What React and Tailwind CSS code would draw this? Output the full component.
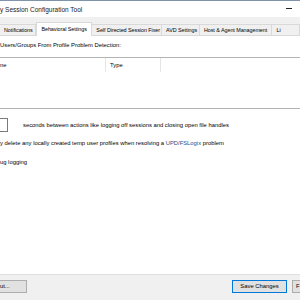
const tabs = [
  { label: 'Notifications', w: 'w-[39px]' },
  { label: 'Behavioral Settings', w: 'w-[60px]', active: true },
  { label: 'Self Directed Session Fixer', w: 'w-[75px]' },
  { label: 'AVD Settings', w: 'w-[41px]' },
  { label: 'Host & Agent Management', w: 'w-[78px]' },
  { label: 'Li', w: 'w-[30px]' },
]

export default function App() {
  return (
    <div className="w-[300px] h-[300px] overflow-hidden flex flex-col bg-[#f0f0f0] text-black text-[5.85px] leading-[7px] font-['Liberation_Sans',Arial,sans-serif]">
      {/* Title bar */}
      <div className="h-[17px] shrink-0 bg-white border-t border-[#7f93ab] flex items-center justify-between">
        <span className="text-[6.5px] text-[#1a1a1a]">y Session Configuration Tool</span>
        <div className="w-[6px] h-px bg-[#222] mr-[8px] -mt-[2px]" />
      </div>

      {/* Tabs */}
      <div className="h-[18px] shrink-0 flex items-end -ml-px whitespace-nowrap text-[5.4px] tracking-[-0.05px]">
        {tabs.map((t) =>
          t.active ? (
            <div
              key={t.label}
              className={`${t.w} h-[14px] -mb-px bg-white border border-b-0 border-[#d9d9d9] flex items-center justify-center relative z-10 pb-[1px]`}
            >
              {t.label}
            </div>
          ) : (
            <div
              key={t.label}
              className={`${t.w} h-[11px] bg-[#f0f0f0] border border-b-0 border-[#d9d9d9] -ml-px first:ml-0 flex items-center pl-[4px] overflow-hidden`}
            >
              {t.label}
            </div>
          )
        )}
      </div>

      {/* Panel */}
      <div className="flex-1 bg-white border-t border-[#d9d9d9] flex flex-col whitespace-nowrap">
        <div className="mt-[6px] h-[7px] flex items-center">Users/Groups From Profile Problem Detection:</div>

        {/* List view */}
        <div className="mt-[8px] h-[52px] border-y border-[#b4b4b4]">
          <div className="h-[14px] flex">
            <div className="w-[106px] border-r border-[#e5e5e5] flex items-center">ne</div>
            <div className="w-[55px] border-r border-[#e5e5e5] flex items-center pl-[4px]">Type</div>
          </div>
        </div>

        {/* Interval row */}
        <div className="mt-[9px] h-[14px] flex items-center">
          <div className="w-[13px] h-[14px] -ml-[5px] border border-[#7a7a7a] bg-white" />
          <span className="ml-[15px]">seconds between actions like logging off sessions and closing open file handles</span>
        </div>

        <div className="mt-[6px] h-[10px] flex items-center">
          <span>
            y delete any locally created temp user profiles when resolving a{' '}
            <span className="text-[#1c4f8f]">UPD/FSLogix</span> problem
          </span>
        </div>

        <div className="mt-[9px] h-[10px] flex items-center">ug logging</div>
      </div>

      {/* Footer */}
      <div className="h-[26px] shrink-0 border-t border-[#e0e0e0] flex items-start pt-[5px] whitespace-nowrap">
        <div className="w-[27px] h-[13px] border border-l-0 border-[#adadad] bg-[#e1e1e1] flex items-center">ut...</div>
        <div className="flex-1" />
        <div className="w-[55px] h-[13px] border border-[#0078d7] bg-[#e1e1e1] flex items-center justify-center">Save Changes</div>
        <div className="w-[20px] h-[13px] ml-[5px] -mr-[12px] border border-[#adadad] bg-[#e1e1e1] flex items-center pl-[3px]">F</div>
      </div>
    </div>
  )
}
